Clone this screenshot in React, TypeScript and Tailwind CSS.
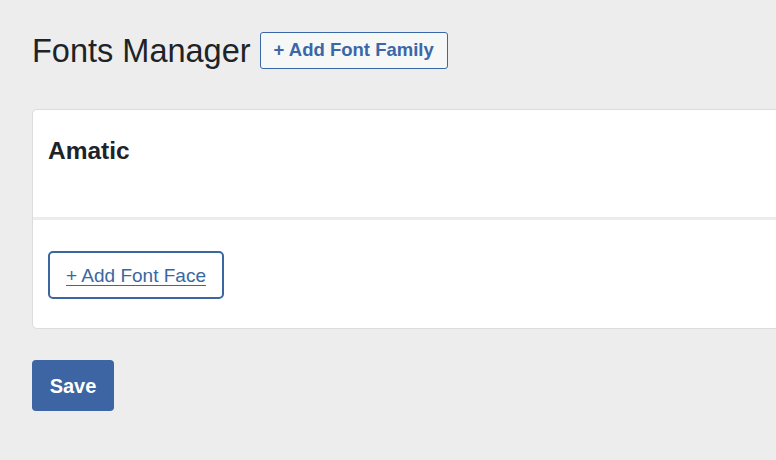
import React from "react";

export default function App() {
  return (
    <div
      className="w-[776px] h-[460px] overflow-hidden bg-[#ededed] pl-8 pt-8 text-[#1e1e1e]"
      style={{ fontFamily: '"Liberation Sans", Arial, sans-serif' }}
    >
      <div className="flex items-center gap-[9px] h-[37px]">
        <h1 className="text-[32.5px] leading-none font-normal text-[#1d2327] pt-[2px]">Fonts Manager</h1>
        <button className="h-[37px] px-[13px] rounded-[3px] border border-[#3a67a8] bg-[#f6f7f7] text-[#3a67a8] text-[18.5px] font-bold leading-none">
          + Add Font Family
        </button>
      </div>

      <div className="mt-[40px] w-[900px] bg-white border border-[#dcdcdc] rounded-[5px]">
        <div className="h-[107px] px-[15px] pt-[29px]">
          <h2 className="text-[24.5px] font-bold leading-none text-[#1d2327]">Amatic</h2>
        </div>
        <div className="border-t-[3px] border-[#ececec] h-[111px] px-[15px] pt-[31px]">
          <button className="h-[48px] px-[16px] rounded-[5px] border-2 border-[#3a67a0] bg-white text-[#3a67a0] text-[19px] leading-none underline underline-offset-[3px]">
            + Add Font Face
          </button>
        </div>
      </div>

      <button className="mt-[31px] w-[82px] h-[51px] rounded-[4px] bg-[#3d64a3] text-white text-[20px] font-bold leading-none">
        Save
      </button>
    </div>
  );
}
